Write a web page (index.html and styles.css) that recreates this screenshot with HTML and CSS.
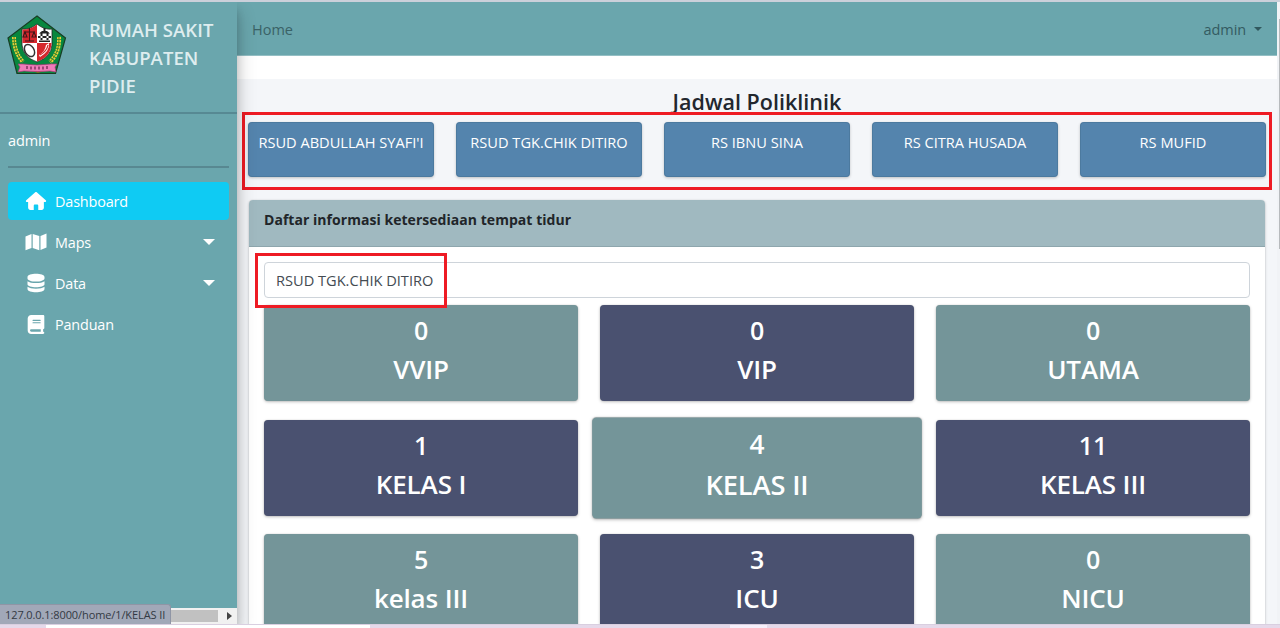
FILE: index.html
```
<!DOCTYPE html>
<html lang="id">
<head>
<meta charset="utf-8">
<title>Dashboard</title>
<link rel="stylesheet" href="styles.css">
</head>
<body>
<div class="window">
  <aside class="sidebar">
    <div class="brand">
      <svg class="logo" viewBox="0 0 60 60" width="60" height="60">
        <path d="M30 1 58.500 23 48.500 58.500H10L1 23Z" fill="#07873e" stroke="#173e24" stroke-width="1.200"/>
        <g fill="none" stroke="#e8d13c" stroke-width="4" stroke-dasharray="2.200 .8">
          <path d="M7 22Q7 37 16 47"/><path d="M52 22Q53 37 43 47"/>
        </g>
        <g fill="none" stroke="#59851c" stroke-width="1"><path d="M7 22Q7 37 16 47M52 22Q53 37 43 47"/></g>
        <path d="M15 14Q23 15 30 9Q37 15 45 14V30Q44 42 30 47Q16 42 15 30Z" fill="#fff" stroke="#222" stroke-width=".8"/>
        <path d="M15.500 14.500Q23 15 30 9.500V28H15.500Z" fill="#d5272d"/>
        <path d="M30 28H44.500Q44 42 30 46.500Z" fill="#d5272d"/>
        <path d="M17 17H28M22.500 13V26M18 26H27M18 17l-2 5h4zM27 17l-2 5h4z" fill="none" stroke="#421718" stroke-width="1.100"/>
        <path d="M32 18.500h11l-3-2.500h-1.500v-3h-2v3H35zM31 21h13v2H31zM33.500 18v8h2v-8zm6 0v8h2v-8zM32 25.500h11V27H32z" fill="#222"/>
        <ellipse cx="22.500" cy="35.500" rx="4.500" ry="6.500" transform="rotate(-32 22.500 35.500)" fill="#fff" stroke="#333" stroke-width="1.500"/>
        <path d="M42 28q1 8-9 14l-1-2q6-3 7-10z" fill="#fff"/><path d="M41 30q-1 6-8 10" fill="none" stroke="#d5272d" stroke-width="1.300"/>
        <path d="M25 53h12v3l-6 2-6-2z" fill="#8b6b20"/>
        <path d="M16 49q14 2 28 0l6 0-2 3 1 5-6-1q-12 1-26 0l-6 1 2-5-2-3z" fill="#f07cb9" stroke="#a73778" stroke-width=".7"/>
        <path d="M20 51v3M24 51.500v3M28 51.500v3M32 51.500v3M36 51.500v3M40 51v3" stroke="#722752" stroke-width="1.300"/>
      </svg>
      <div class="brand-text">RUMAH SAKIT<br>KABUPATEN<br>PIDIE</div>
    </div>
    <div class="user">admin</div>
    <nav class="menu">
      <a class="item active"><svg class="ico" viewBox="0 0 576 512" width="20" height="18"><path fill="#fff" d="M575.800 255.500c0 18-15 32.100-32 32.100h-32l.7 160.200c.2 35.500-28.500 64.300-64 64.300H352V384c0-18-14-32-32-32h-64c-18 0-32 14-32 32v128H128.100c-35.300 0-64-28.700-64-64V287.600H32c-18 0-32-14-32-32.100 0-9 3-17 10-24L266.400 8c7-7 15-8 22-8s15 2 21 7l255.400 224.500c8 7 12 15 11 24z"/></svg><span>Dashboard</span></a>
      <a class="item"><svg class="ico" viewBox="0 0 22 18" width="22" height="18"><path fill="#fff" d="M.5 3.500 6.500 1v14L.5 17.300zM7.700 1l6.600 2v14.200L7.700 15zM15.500 3l6-2.400v13.900l-6 2.500z"/></svg><span>Maps</span><i class="caret"></i></a>
      <a class="item"><svg class="ico" viewBox="0 0 18 20" width="18" height="20"><path fill="#fff" d="M.5 4C.5-.3 17.500-.3 17.500 4v1.500c0 4.100-17 4.100-17 0zM.5 8.200c3 2.500 14 2.500 17 0v3c0 4-17 4-17 0zM.5 13.800c3 2.500 14 2.500 17 0V16c0 4.400-17 4.400-17 0z"/></svg><span>Data</span><i class="caret"></i></a>
      <a class="item"><svg class="ico" viewBox="0 0 448 512" width="17" height="19"><path fill="#fff" fill-rule="evenodd" d="M96 0C43 0 0 43 0 96v320c0 53 43 96 96 96h320c18 0 32-14 32-32s-14-32-32-32v-64c18 0 32-14 32-32V32c0-18-14-32-32-32H96zm0 384h256v64H96c-18 0-32-14-32-32s14-32 32-32zm32-240c0-9 7-16 16-16h192c9 0 16 7 16 16s-7 16-16 16H144c-9 0-16-7-16-16zm16 48h192c9 0 16 7 16 16s-7 16-16 16H144c-9 0-16-7-16-16s7-16 16-16z"/></svg><span>Panduan</span></a>
    </nav>
    <div class="hscroll"><div class="hthumb"></div><i class="arrow"></i></div>
  </aside>
  <main class="main">
    <header class="topbar"><span class="home">Home</span><span class="account">admin<i class="drop"></i></span></header>
    <div class="spacer"></div>
    <section class="content">
      <h1 class="title">Jadwal Poliklinik</h1>
      <div class="clinics">
        <a class="clinic">RSUD ABDULLAH SYAFI'I</a>
        <a class="clinic">RSUD TGK.CHIK DITIRO</a>
        <a class="clinic">RS IBNU SINA</a>
        <a class="clinic">RS CITRA HUSADA</a>
        <a class="clinic">RS MUFID</a>
        <div class="mark mark-clinics"></div>
      </div>
      <div class="card">
        <div class="card-head">Daftar informasi ketersediaan tempat tidur</div>
        <div class="card-body">
          <div class="select"><span>RSUD TGK.CHIK DITIRO</span><div class="mark mark-select"></div></div>
          <div class="rooms">
            <div class="room"><b>0</b><span>VVIP</span></div>
            <div class="room navy"><b>0</b><span>VIP</span></div>
            <div class="room"><b>0</b><span>UTAMA</span></div>
            <div class="room navy"><b>1</b><span>KELAS I</span></div>
            <div class="room hovered"><b>4</b><span>KELAS II</span></div>
            <div class="room navy"><b>11</b><span>KELAS III</span></div>
            <div class="room"><b>5</b><span>kelas III</span></div>
            <div class="room navy"><b>3</b><span>ICU</span></div>
            <div class="room"><b>0</b><span>NICU</span></div>
          </div>
        </div>
      </div>
    </section>
  </main>
  <div class="vscroll"><div class="vthumb"></div></div>
  <div class="status">127.0.0.1:8000/home/1/KELAS II</div>
</div>
<footer class="edge"><div class="edge-a"></div><div class="edge-b"></div></footer>
</body>
</html>
```
FILE: styles.css
```
* { box-sizing: border-box; }
body { margin: 0; height: 628px; overflow: hidden; display: flex; flex-direction: column; background: #fff; font-family: "Open Sans", "Noto Sans", sans-serif; font-size: 14px; color: #212529; }
.window { position: relative; display: flex; height: 624px; flex: none; border-top: 2px solid #cbd0da; overflow: hidden; }
.sidebar { position: relative; z-index: 2; width: 237px; flex: none; display: flex; flex-direction: column; background: #6aa6ad; box-shadow: 0 10px 18px rgba(0,0,0,.24), 0 8px 8px rgba(0,0,0,.14); color: #fff; }
.brand { display: flex; height: 112px; flex: none; padding: 13px 0 0 7px; border-bottom: 2px solid #578993; }
.logo { flex: none; }
.brand-text { margin: .5px 0 0 22px; font-size: 18.500px; font-weight: 600; line-height: 28.400px; letter-spacing: .05px; color: #deedef; white-space: nowrap; }
.user { height: 54px; flex: none; margin: 0 8px; padding-top: 17px; line-height: 20px; font-size: 14.500px; letter-spacing: -.1px; border-bottom: 2px solid #588891; }
.menu { display: flex; flex-direction: column; gap: 3px; padding: 14px 8px 0; flex: 1; }
.item { display: flex; align-items: center; height: 38px; border-radius: 4px; padding: 0 14px 0 17px; font-size: 14.400px; letter-spacing: -.15px; }
.item .ico { width: 22px; flex: none; }
.item span { margin-left: 8px; }
.active { background: #0fcbf3; }
.caret { margin-left: auto; border: 6px solid transparent; border-top-color: #fff; border-bottom: 0; }
.hscroll { display: flex; align-items: center; height: 16px; flex: none; background: #f1f1f1; padding-right: 5px; }
.hthumb { width: 218px; height: 12px; background: #c1c1c1; }
.arrow { margin-left: auto; border: 4px solid transparent; border-left: 5px solid #444; border-right: 0; }
.main { width: 1040px; flex: none; }
.topbar { display: flex; justify-content: space-between; align-items: center; height: 54px; padding: 2px 15px 0 15px; background: #6aa6ad; border-bottom: 1px solid #94bfc4; color: #3a6266; font-size: 14.500px; }
.account { display: flex; align-items: center; gap: 8px; color: #345b61; letter-spacing: -.1px; }
.drop { border: 4.500px solid transparent; border-top-color: #31585e; border-bottom: 0; margin-top: -2px; }
.spacer { height: 23px; background: #fff; }
.content { height: 560px; background: #f4f6f9; padding: 8px 11px 0; }
.title { margin: 0; height: 35px; text-align: center; font-size: 21.500px; font-weight: 600; line-height: 30px; letter-spacing: .02px; color: #22272e; }
.clinics { position: relative; display: grid; grid-template-columns: repeat(5, 1fr); gap: 22px; height: 55px; }
.clinic { padding-top: 10px; text-align: center; line-height: 20px; border-radius: 4px; background: #5484ad; color: #fff; font-size: 14.600px; white-space: nowrap; box-shadow: inset 0 0 0 1px rgba(50,90,120,.25), 0 1px 3px rgba(0,0,0,.22); }
.mark { position: absolute; border: 3px solid #ee1b24; pointer-events: none; }
.mark-clinics { left: -6px; top: -10px; width: 1030px; height: 78px; }
.card { margin: 23px 1px 0; height: 440px; border-radius: 4px; background: #fff; box-shadow: 0 0 1px rgba(0,0,0,.16), 0 1px 3px rgba(0,0,0,.22); }
.card-head { height: 47px; padding: 10px 15px 0; line-height: 20px; font-size: 14px; font-weight: 700; border-radius: 4px 4px 0 0; border-bottom: 1px solid #8ea6ad; background: #a0b9c0; letter-spacing: .04px; }
.card-body { padding: 15px 15px 0; }
.select { position: relative; height: 36px; padding: 7px 11px; line-height: 20px; border: 1px solid #ced4da; border-radius: 4px; background: #fff; font-size: 14.600px; color: #444b52; }
.mark-select { left: -10px; top: -10px; width: 192px; height: 55px; }
.rooms { display: grid; grid-template-columns: repeat(3, 1fr); grid-auto-rows: 96px; gap: 18.500px 22px; margin-top: 7.400px; }
.room { display: flex; flex-direction: column; align-items: center; border-radius: 4px; background: #749599; color: #fff; font-size: 26px; font-weight: 600; line-height: 39.500px; padding-top: 6px; letter-spacing: -.15px; box-shadow: 0 0 1px rgba(0,0,0,.2), 0 1px 3px rgba(0,0,0,.25); }
.room b { font-weight: 600; font-size: 25px; line-height: 39px; }
.navy { background: #4a5170; }
.hovered { transform: scale(1.05); }
.vscroll { width: 3px; background: #f1f3f6; }
.vthumb { height: 230px; margin: 17px 0 0 2px; background: #b7babd; }
.status { position: absolute; z-index: 4; left: 0; bottom: 0; width: 171px; height: 20px; padding-left: 5px; line-height: 19px; border: 1px solid #8f95a5; border-left: 0; border-bottom: 0; border-radius: 0 3px 0 0; background: #a1a8b8; color: #333943; font-size: 11px; letter-spacing: -.1px; white-space: nowrap; }
.edge { display: flex; height: 4px; flex: none; border-top: 1px solid #d9cfe0; background: #e5d9ea; }
.edge-a { width: 324px; margin-left: 46px; background: #fff; }
.edge-b { width: 37px; margin-left: 360px; background: #f6effa; }
```
